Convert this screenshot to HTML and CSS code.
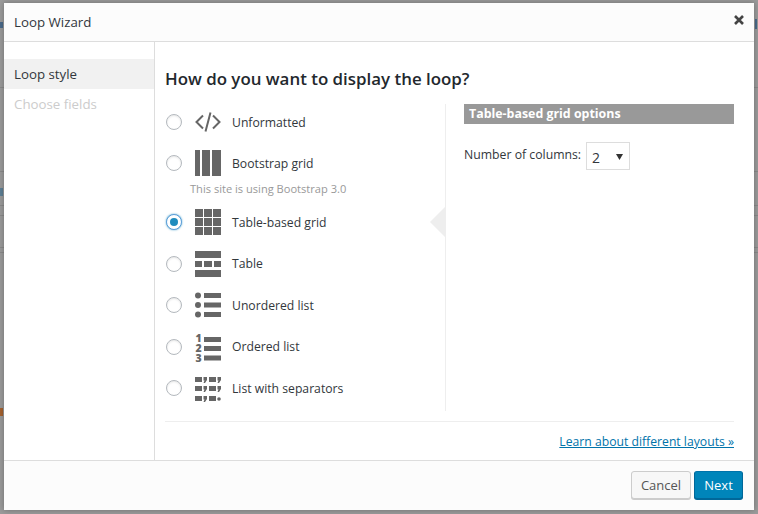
FILE: index.html
```html
<!DOCTYPE html>
<html lang="en">
<head>
<meta charset="utf-8">
<title>Loop Wizard</title>
<link rel="stylesheet" href="styles.css">
</head>
<body>
<div class="dialog">
  <header class="dialog-head">
    <span class="dialog-title">Loop Wizard</span>
    <svg class="close" width="10" height="10" viewBox="0 0 10 10"><path d="M1 1l8 8M9 1l-8 8" stroke="#444" stroke-width="2.6" fill="none"/></svg>
  </header>
  <div class="dialog-body">
    <nav class="steps">
      <div class="step active">Loop style</div>
      <div class="step disabled">Choose fields</div>
    </nav>
    <main class="content">
      <h2 class="heading">How do you want to display the loop?</h2>
      <div class="columns">
        <div class="options">
          <label class="option"><span class="radio"></span>
            <svg class="icon" width="26" height="26" viewBox="0 0 26 26"><path d="M8 6.500L1.500 13 8 19.500M18 6.500L24.500 13 18 19.500M15.500 3.500L10.500 22.500" stroke="#666" stroke-width="2" fill="none"/></svg>
            <span class="option-label">Unformatted</span></label>
          <label class="option"><span class="radio"></span>
            <svg class="icon" width="26" height="26" viewBox="0 0 26 26"><path fill="#666" d="M0 0h5v26H0zM7 0h8v26H7zM17 0h9v26h-9z"/></svg>
            <span class="option-label">Bootstrap grid</span></label>
          <div class="note">This site is using Bootstrap 3.0</div>
          <label class="option"><span class="radio checked"></span>
            <svg class="icon" width="26" height="26" viewBox="0 0 26 26"><path fill="#666" d="M0 0h8v8H0zM9 0h8v8H9zM18 0h8v8h-8zM0 9h8v8H0zM9 9h8v8H9zM18 9h8v8h-8zM0 18h8v8H0zM9 18h8v8H9zM18 18h8v8h-8z"/></svg>
            <span class="option-label">Table-based grid</span></label>
          <label class="option"><span class="radio"></span>
            <svg class="icon" width="26" height="26" viewBox="0 0 26 26"><path fill="#666" d="M0 0h26v7H0zM0 10h7v6H0zM9 10h8v6H9zM19 10h7v6h-7zM0 19h26v7H0z"/></svg>
            <span class="option-label">Table</span></label>
          <label class="option"><span class="radio"></span>
            <svg class="icon" width="26" height="26" viewBox="0 0 26 26"><g fill="#666"><circle cx="3" cy="3.500" r="3"/><circle cx="3" cy="13" r="3"/><circle cx="3" cy="22.500" r="3"/><path d="M9 1h17v5H9zM9 10.500h17v5H9zM9 20h17v5H9z"/></g></svg>
            <span class="option-label">Unordered list</span></label>
          <label class="option"><span class="radio"></span>
            <svg class="icon" width="26" height="26" viewBox="0 0 26 26"><g fill="#666"><text class="num" x="0.500" y="8">1</text><text class="num" x="0.500" y="18">2</text><text class="num" x="0.500" y="28">3</text><path d="M9 3h17v5H9zM9 12h17v5H9zM9 21.500h17v5H9z"/></g></svg>
            <span class="option-label">Ordered list</span></label>
          <label class="option"><span class="radio"></span>
            <svg class="icon" width="26" height="26" viewBox="0 0 26 26"><g fill="#666"><path d="M0 2h7v5H0zM14 2h7v5h-7zM0 11h7v5H0zM14 11h7v5h-7zM0 21h7v5H0zM14 21h7v5h-7z"/><path d="M8.500 2H12v3l-2 3H8.500l1-2.500h-1zM22.500 2H26v3l-2 3h-1.500l1-2.500h-1zM8.500 11H12v3l-2 3H8.500l1-2.500h-1zM22.500 11H26v3l-2 3h-1.500l1-2.500h-1zM8.500 21H12v3l-2 3H8.500l1-2.500h-1z"/><circle cx="24" cy="24" r="1.800"/></g></svg>
            <span class="option-label">List with separators</span></label>
        </div>
        <section class="settings">
          <span class="pointer"></span>
          <h3 class="settings-title">Table-based grid options</h3>
          <div class="field">
            <span class="field-label">Number of columns:</span>
            <span class="select"><span>2</span><svg width="7" height="6" viewBox="0 0 7 6"><path d="M0 0h7L3.500 6z" fill="#333"/></svg></span>
          </div>
        </section>
      </div>
      <div class="learn"><a href="#" class="learn-link">Learn about different layouts »</a></div>
    </main>
  </div>
  <footer class="dialog-foot">
    <button class="btn btn-cancel" type="button">Cancel</button>
    <button class="btn btn-next" type="button">Next</button>
  </footer>
</div>
</body>
</html>
```
FILE: styles.css
```css
* { box-sizing: border-box; }
html, body { height: 100%; }
body {
  margin: 0;
  background-color: #9b9b9b;
  background-image:
    linear-gradient(#8a8a8a, #8a8a8a),
    linear-gradient(#8a8a8a, #8a8a8a),
    linear-gradient(#8a8a8a, #8a8a8a),
    linear-gradient(#8a8a8a, #8a8a8a),
    linear-gradient(#8a8a8a, #8a8a8a),
    linear-gradient(#8a8a8a, #8a8a8a),
    linear-gradient(#a5622f, #a5622f),
    linear-gradient(#5d7f95, #5d7f95),
    linear-gradient(#4a6a8a, #4a6a8a),
    linear-gradient(#4a6a8a, #4a6a8a);
  background-repeat: no-repeat;
  background-size: 100% 1px, 100% 1px, 100% 1px, 100% 1px, 100% 1px, 100% 1px, 3px 8px, 3px 8px, 3px 6px, 2px 10px;
  background-position: 0 87px, 0 171px, 0 205px, 0 215px, 0 247px, 0 252px, 0 408px, 0 188px, 0 22px, 755px 19px;
  padding: 3px 4px 4px;
  font-family: "Open Sans", "Liberation Sans", sans-serif;
  font-size: 13px;
  color: #32373c;
  overflow: hidden;
}
.dialog {
  height: 507px;
  background: #fff;
  display: flex;
  flex-direction: column;
  box-shadow: 0 0 6px rgba(0,0,0,.3);
}
.dialog-head {
  height: 39px;
  flex: none;
  display: flex;
  align-items: center;
  justify-content: space-between;
  padding: 0 10px;
  background: #fcfcfc;
  border-bottom: 1px solid #ddd;
}
.dialog-title { font-size: 13.300px; color: #32373c; }
.close { display: block; margin-top: -5px; }
.dialog-body { flex: 1; display: flex; min-height: 0; }
.steps {
  width: 151px;
  flex: none;
  padding-top: 17px;
  border-right: 1px solid #ddd;
}
.step { height: 30px; line-height: 30px; padding-left: 10px; font-size: 13.300px; }
.step.active { background: #f1f1f1; }
.step.disabled { color: #ccc; }
.content { flex: 1; padding: 0 20px 0 10px; display: flex; flex-direction: column; }
.heading {
  margin: 26px 0 0;
  font-size: 16.900px;
  line-height: 22px;
  font-weight: 600;
  color: #23282d;
}
.columns { display: flex; margin-top: 14px; height: 307px; }
.options { width: 281px; flex: none; border-right: 1px solid #eee; }
.option {
  height: 41.450px;
  display: flex;
  align-items: center;
  padding-left: 1px;
}
.option:first-child { margin-top: -2.700px; }
.radio {
  width: 16px;
  height: 16px;
  flex: none;
  border-radius: 50%;
  border: 1px solid #b4b9be;
  background: #fff;
  box-shadow: inset 0 1px 2px rgba(0,0,0,.1);
  margin-right: 13px;
  display: flex;
  align-items: center;
  justify-content: center;
}
.radio.checked {
  border-color: #5b9dd9;
  box-shadow: 0 0 2px rgba(30,140,190,.8);
}
.radio.checked::before {
  content: "";
  width: 8px;
  height: 8px;
  border-radius: 50%;
  background: #1e8cbe;
}
.icon { flex: none; display: block; overflow: visible; }
.num { font-family: "Open Sans", sans-serif; font-size: 10.500px; font-weight: 800; }
.option-label { margin-left: 11px; font-size: 12.200px; }
.note { height: 17.500px; line-height: 10px; padding-left: 25px; font-size: 11.100px; color: #999; }
.settings { flex: 1; padding-left: 18px; position: relative; }
.pointer {
  position: absolute;
  left: -16px;
  top: 102px;
  width: 0;
  height: 0;
  border-style: solid;
  border-width: 16px 16px 16px 0;
  border-color: transparent #eee transparent transparent;
}
.settings-title {
  margin: 0;
  height: 20px;
  line-height: 20px;
  padding-left: 5px;
  background: #999;
  color: #fff;
  font-size: 12.400px;
  font-weight: 700;
}
.field { display: flex; align-items: center; margin-top: 18px; }
.field-label { font-size: 12.250px; margin-right: 5px; padding-bottom: 3px; }
.select {
  width: 44px;
  height: 28px;
  border: 1px solid #ddd;
  display: flex;
  align-items: center;
  justify-content: space-between;
  padding: 2px 6px 0 5px;
  font-size: 14px;
  color: #32373c;
}
.learn {
  margin-top: 10px;
  border-top: 1px solid #eee;
  padding-top: 10px;
  text-align: right;
  line-height: 18px;
}
.learn-link { color: #0073aa; font-size: 12.200px; }
.dialog-foot {
  height: 50px;
  flex: none;
  display: flex;
  justify-content: flex-end;
  align-items: flex-start;
  gap: 3px;
  padding: 10px 11px 0 0;
  background: #fcfcfc;
  border-top: 1px solid #ddd;
}
.btn {
  height: 28px;
  padding: 0;
  border-radius: 3px;
  font-family: inherit;
  font-size: 13px;
  border: 1px solid;
}
.btn-cancel { width: 60px; background: #f7f7f7; border-color: #ccc; color: #555; box-shadow: 0 1px 0 #ccc; }
.btn-next { width: 49px; background: #0085ba; border-color: #0073aa #006799 #006799; color: #fff; box-shadow: 0 1px 0 #006799; }
```
